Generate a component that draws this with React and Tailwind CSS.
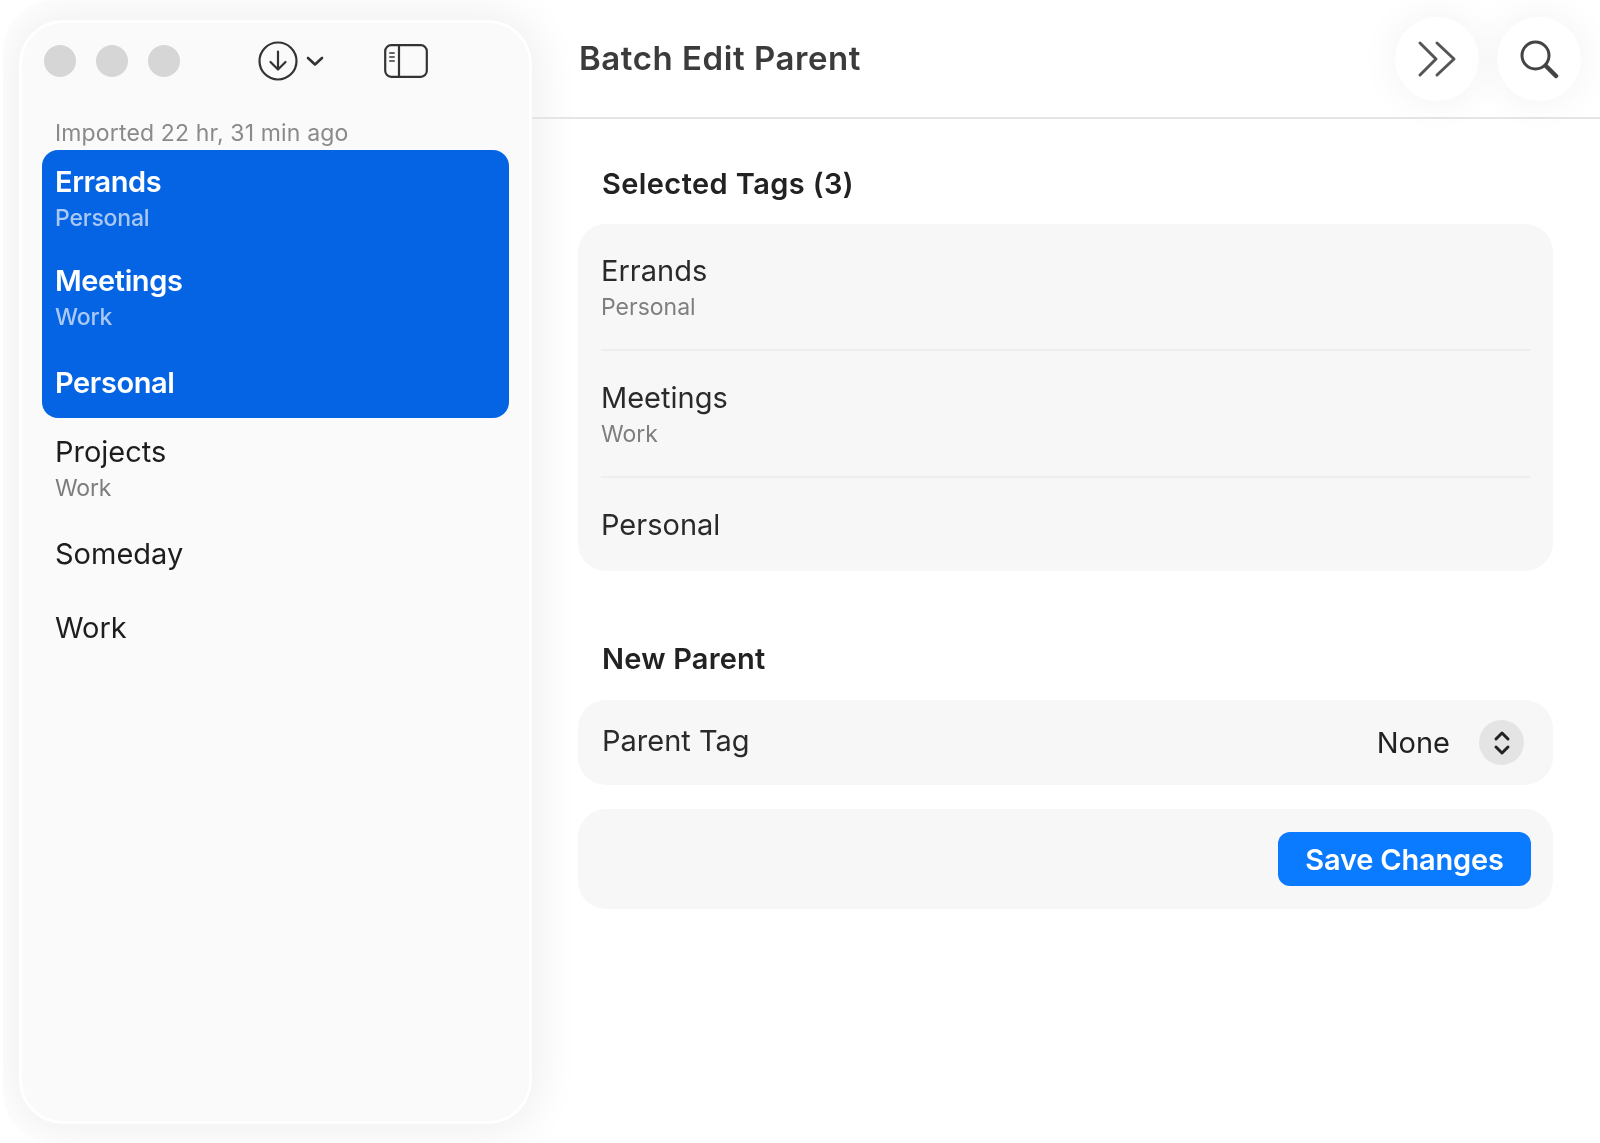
const F = { fontFamily: "Inter, 'Noto Sans', sans-serif" };

function SideRow({ title, sub, selected, h }) {
  return (
    <div className={`flex flex-col pl-[13px] pt-[19px] ${h}`}>
      <div className={`text-[29px] leading-[26px] ${selected ? "text-white font-semibold tracking-[-0.4px]" : "text-[#1d1d1d] tracking-[0px]"}`}>{title}</div>
      {sub && <div className={`mt-[10px] text-[23px] leading-[26px] tracking-[-0.2px] ${selected ? "text-[#a9c8f6] font-medium" : "text-[#7d7d7d]"}`}>{sub}</div>}
    </div>
  );
}

function TagRow({ title, sub, line }) {
  return (
    <div className={`flex flex-col pt-[34px] ${line ? "border-b-2 border-[#eeeeee] h-[127px]" : "h-[91px]"}`}>
      <div className="text-[29px] leading-[26px] text-[#2a2a2a]">{title}</div>
      {sub && <div className="mt-[10px] text-[23px] leading-[26px] text-[#7f7f7f]">{sub}</div>}
    </div>
  );
}

function CircleBtn({ children }) {
  return (
    <div className="flex h-[84px] w-[84px] items-center justify-center rounded-full bg-white shadow-[0_0_40px_rgba(0,0,0,0.06)]">
      {children}
    </div>
  );
}

export default function App() {
  return (
    <div style={F} className="flex h-[1143px] w-[1600px] overflow-hidden bg-white blur-[0.5px]">
      <div className="ml-[3px] h-[1143px] w-[600px] shrink-0 overflow-hidden rounded-bl-[50px] rounded-tl-[50px] -mr-[71px] bg-white">
        <div className="ml-[16px] mt-[20px] flex h-[1104px] w-[513px] flex-col rounded-[44px] border-[3px] border-white bg-[#fafafa] shadow-[0_0_40px_10px_rgba(0,0,0,0.06)]">
          <div className="flex h-[74px] items-center pl-[22px] pt-[2px]">
            <div className="h-[32px] w-[32px] rounded-full bg-[#d6d6d6]" />
            <div className="ml-[20px] h-[32px] w-[32px] rounded-full bg-[#d6d6d6]" />
            <div className="ml-[20px] h-[32px] w-[32px] rounded-full bg-[#d6d6d6]" />
            <svg className="ml-[78px]" width="40" height="40" viewBox="0 0 40 40" fill="none" stroke="#333" strokeWidth="2.2" strokeLinecap="round" strokeLinejoin="round">
              <circle cx="20" cy="20" r="18.5" />
              <path d="M20 10.5V28M12.5 21l7.5 7.5 7.5-7.5" />
            </svg>
            <svg className="ml-[7px]" width="20" height="14" viewBox="0 0 20 14" fill="none" stroke="#333" strokeWidth="2.6" strokeLinecap="round" strokeLinejoin="round">
              <path d="M3 4l7 6.5L17 4" />
            </svg>
            <svg className="ml-[59px]" width="44" height="34" viewBox="0 0 44 34" fill="none" stroke="#333" strokeWidth="2.2" strokeLinecap="round" strokeLinejoin="round">
              <rect x="1.2" y="1.2" width="41.6" height="31.6" rx="6" />
              <path d="M15 1.2v31.6" />
              <path d="M6 9h4M6 13h4M6 17h4" strokeWidth="2" stroke="#666" />
            </svg>
          </div>
          <div className="flex h-[42px] items-end pl-[33px] text-[23px] leading-[26px] tracking-[0.15px] text-[#8a8a8a]">
            <span className="-mb-[7px]">Imported 22 hr, 31 min ago</span>
          </div>
          <div className="mx-[20px] mt-[11px]">
            <div className="flex h-[268px] flex-col rounded-[16px] bg-[#0564e3]">
              <SideRow title="Errands" sub="Personal" selected h="h-[99px]" />
              <SideRow title="Meetings" sub="Work" selected h="h-[102px]" />
              <SideRow title="Personal" selected h="h-[67px]" />
            </div>
            <div className="mt-[2px] flex flex-col">
              <SideRow title="Projects" sub="Work" h="h-[102px]" />
              <SideRow title="Someday" h="h-[74px]" />
              <SideRow title="Work" h="h-[74px]" />
            </div>
          </div>
        </div>
      </div>
      <div className="flex min-w-0 flex-1 flex-col">
        <div className="relative flex h-[119px] shrink-0 items-center justify-between border-b-2 border-[#e5e5e5] pl-[47px] pr-[19px]">
          <div className="mt-[-2px] text-[33px] font-semibold leading-[40px] tracking-[0.55px] text-[#3b3b3b]">Batch Edit Parent</div>
          <div className="flex gap-[18px] pt-[1px]">
            <CircleBtn>
              <svg width="40" height="38" viewBox="0 0 40 38" fill="none" stroke="#555" strokeWidth="3" strokeLinecap="round" strokeLinejoin="round">
                <path d="M3 3l16 16L3 35M20 3l17 16-17 16" />
              </svg>
            </CircleBtn>
            <CircleBtn>
              <svg width="40" height="40" viewBox="0 0 40 40" fill="none" stroke="#444" strokeLinecap="round">
                <circle cx="16.5" cy="16.5" r="13.5" strokeWidth="3" />
                <path d="M27 27l10 10" strokeWidth="4.5" />
              </svg>
            </CircleBtn>
          </div>
        </div>
        <div className="flex flex-col pl-[46px] pr-[47px]">
          <div className="mt-[50px] pl-[24px] text-[29px] font-semibold leading-[30px] tracking-[0.4px] text-[#222]">Selected Tags (3)</div>
          <div className="mt-[25px] h-[347px] rounded-[28px] bg-[#f7f7f7] px-[23px]">
            <TagRow title="Errands" sub="Personal" line />
            <TagRow title="Meetings" sub="Work" line />
            <TagRow title="Personal" />
          </div>
          <div className="mt-[73px] pl-[24px] text-[29px] font-semibold leading-[30px] tracking-[0.2px] text-[#222]">New Parent</div>
          <div className="mt-[26px] flex h-[85px] items-center justify-between rounded-[28px] bg-[#f7f7f7] pl-[24px] pr-[29px]">
            <div className="-mt-[3px] text-[29px] leading-[30px] text-[#2a2a2a]">Parent Tag</div>
            <div className="flex items-center gap-[29px]">
              <div className="mt-[1px] text-[29px] leading-[30px] text-[#222]">None</div>
              <div className="flex h-[45px] w-[45px] items-center justify-center rounded-full bg-[#e4e4e4]">
                <svg width="20" height="28" viewBox="0 0 20 28" fill="none" stroke="#222" strokeWidth="3" strokeLinecap="round" strokeLinejoin="round">
                  <path d="M4 10l6-6 6 6M4 18l6 6 6-6" />
                </svg>
              </div>
            </div>
          </div>
          <div className="mt-[24px] flex h-[100px] items-center justify-end rounded-[28px] bg-[#f7f7f7] pr-[22px]">
            <div className="flex h-[54px] w-[253px] items-center justify-center rounded-[12px] bg-[#0a7aff] pt-[2px] text-[29px] font-semibold leading-[30px] tracking-[-0.2px] text-white">Save Changes</div>
          </div>
        </div>
      </div>
    </div>
  );
}
